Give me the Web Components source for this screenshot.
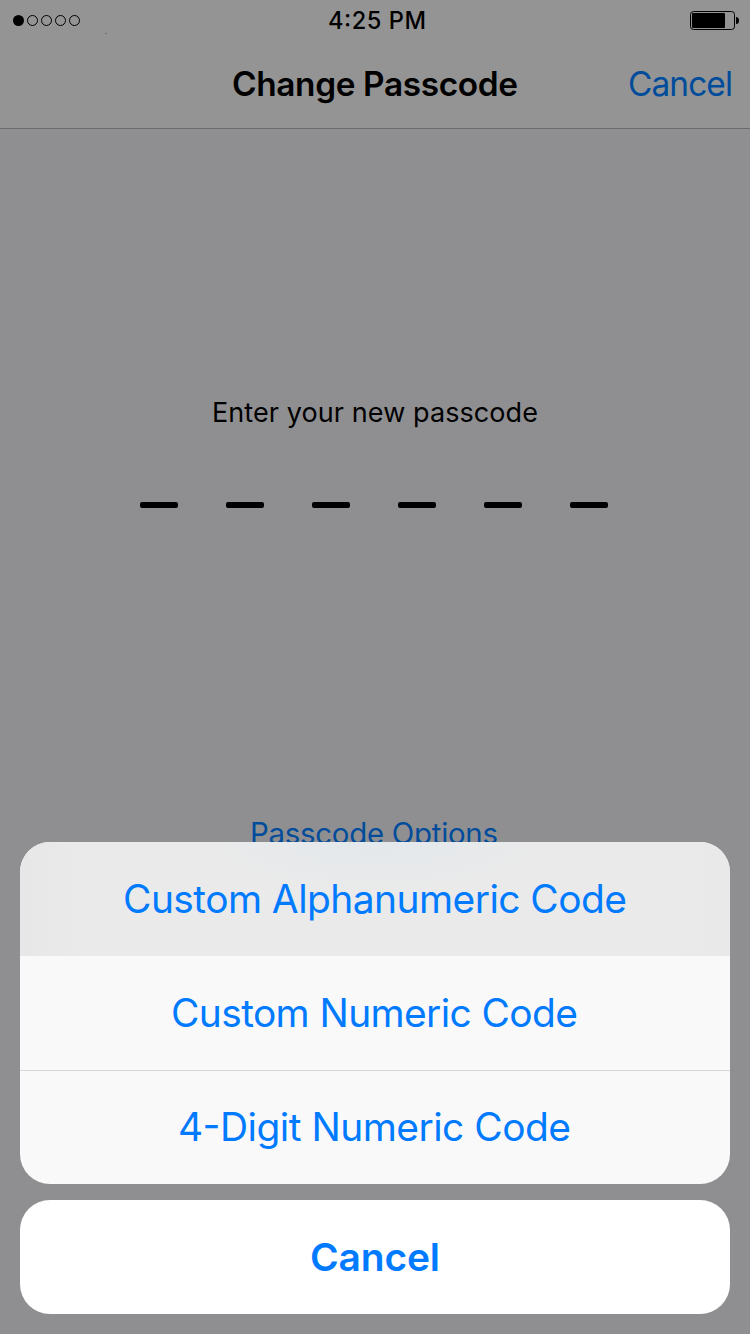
<!DOCTYPE html>
<html lang="en"><head><meta charset="utf-8"><title>Change Passcode</title>
<style>html,body{margin:0;height:100%;overflow:hidden}body{font-family:Inter,"Liberation Sans",sans-serif;color:#000}</style></head>
<body><passcode-screen></passcode-screen>
<script>
const define=(name,css,html)=>customElements.define(name,class extends HTMLElement{
  constructor(){super();this.attachShadow({mode:'open'}).innerHTML=`<style>:host{box-sizing:border-box}${css}</style>${html}`}
});
// Text fitted to an optical width: SVG text keeps its real glyphs and stays selectable.
customElements.define('fit-text',class extends HTMLElement{
  connectedCallback(){
    const w=this.getAttribute('w'),s=this.getAttribute('size'),b=this.getAttribute('weight')||400;
    this.attachShadow({mode:'open'}).innerHTML=`<style>:host{display:block;width:${w}px;height:${s*1.25}px}svg{display:block;overflow:visible}text{font-size:${s}px;font-weight:${b};fill:currentColor}</style><svg width="${w}" height="${s*1.25}"><text x="-1" y="${s}" textLength="${+w+1}" lengthAdjust="spacing"></text></svg>`;
    this.shadowRoot.querySelector('text').textContent=this.getAttribute('label');
  }
});
define('status-bar',`:host{display:grid;grid-template-columns:1fr auto 1fr;height:40px;align-items:start}svg{display:block}.time{padding:5.4px 0 0 4px}.battery{justify-self:end}`,
`<svg width="110" height="40"><circle cx="18.5" cy="20.5" r="5.5"/><g fill="none" stroke="#000" stroke-width="1"><circle cx="32.5" cy="20.5" r="5"/><circle cx="46.5" cy="20.5" r="5"/><circle cx="60.5" cy="20.5" r="5"/><circle cx="74.5" cy="20.5" r="5"/></g><rect x="105" y="33" width="2" height="1" fill="#707070"/></svg>
<fit-text class="time" label="4:25 PM" w="97" size="23.6" weight="500"></fit-text>
<svg class="battery" width="60" height="40"><rect x=".5" y="11.5" width="44" height="18" rx="3" fill="none" stroke="#000"/><rect x="2" y="13" width="33" height="15" rx="1"/><path d="M46 17q3 0 3 3.5T46 24z"/></svg>`);
define('nav-bar',`:host{display:grid;grid-template-columns:1fr 285px 1fr;height:88px;padding-top:23px}.title{grid-column:2}.cancel{justify-self:end;margin-right:17px;color:#004c9b}`,
`<fit-text class="title" label="Change Passcode" w="285" size="33.4" weight="600"></fit-text><fit-text class="cancel" label="Cancel" w="104" size="33.4"></fit-text>`);
define('passcode-entry',`:host{display:flex;flex-direction:column;align-items:center;padding-top:266px}.dashes{display:flex;gap:48px;margin:73.25px 2px 0 0}.dashes i{width:38px;height:6px;border-radius:2px;background:#000}.options{margin:307px 2px 0 0;color:#004c9b}`,
`<fit-text label="Enter your new passcode" w="325" size="27"></fit-text><div class="dashes"><i></i><i></i><i></i><i></i><i></i><i></i></div><fit-text class="options" label="Passcode Options" w="247" size="29.4"></fit-text>`);
define('sheet-action',`:host{display:flex;justify-content:center;align-items:center;height:114px;padding-bottom:2px;color:#007aff}`,`<slot></slot>`);
define('action-sheet',`:host{display:block}.group,.cancel{border-radius:30px;overflow:hidden}.group{background:#f9f9f9}.cancel{background:#fff;margin-top:16px}.pressed{background:radial-gradient(ellipse 170px 50px at 50% 0,#e3e8ec,#e3e8ec00),linear-gradient(90deg,#e7e7e8,#eaeaea 60px,#eaeaea 660px,#e9e9e9)}.line{border-top:1px solid #d5d6d6}`,
`<div class="group"><sheet-action class="pressed"><fit-text label="Custom Alphanumeric Code" w="503" size="38.9"></fit-text></sheet-action><sheet-action><fit-text label="Custom Numeric Code" w="406" size="38.9"></fit-text></sheet-action><sheet-action class="line"><fit-text label="4-Digit Numeric Code" w="392" size="38.9"></fit-text></sheet-action></div><div class="cancel"><sheet-action><fit-text label="Cancel" w="129" size="38.9" weight="600"></fit-text></sheet-action></div>`);
define('passcode-screen',`:host{display:block;position:relative;width:750px;height:1334px;background:#8f8f91;overflow:hidden}header{background:#949494;border-bottom:1px solid #6b6b6e;height:128px}action-sheet{position:absolute;left:20px;right:20px;top:842px}`,
`<header><status-bar></status-bar><nav-bar></nav-bar></header><passcode-entry></passcode-entry><action-sheet></action-sheet>`);
</script></body></html>
